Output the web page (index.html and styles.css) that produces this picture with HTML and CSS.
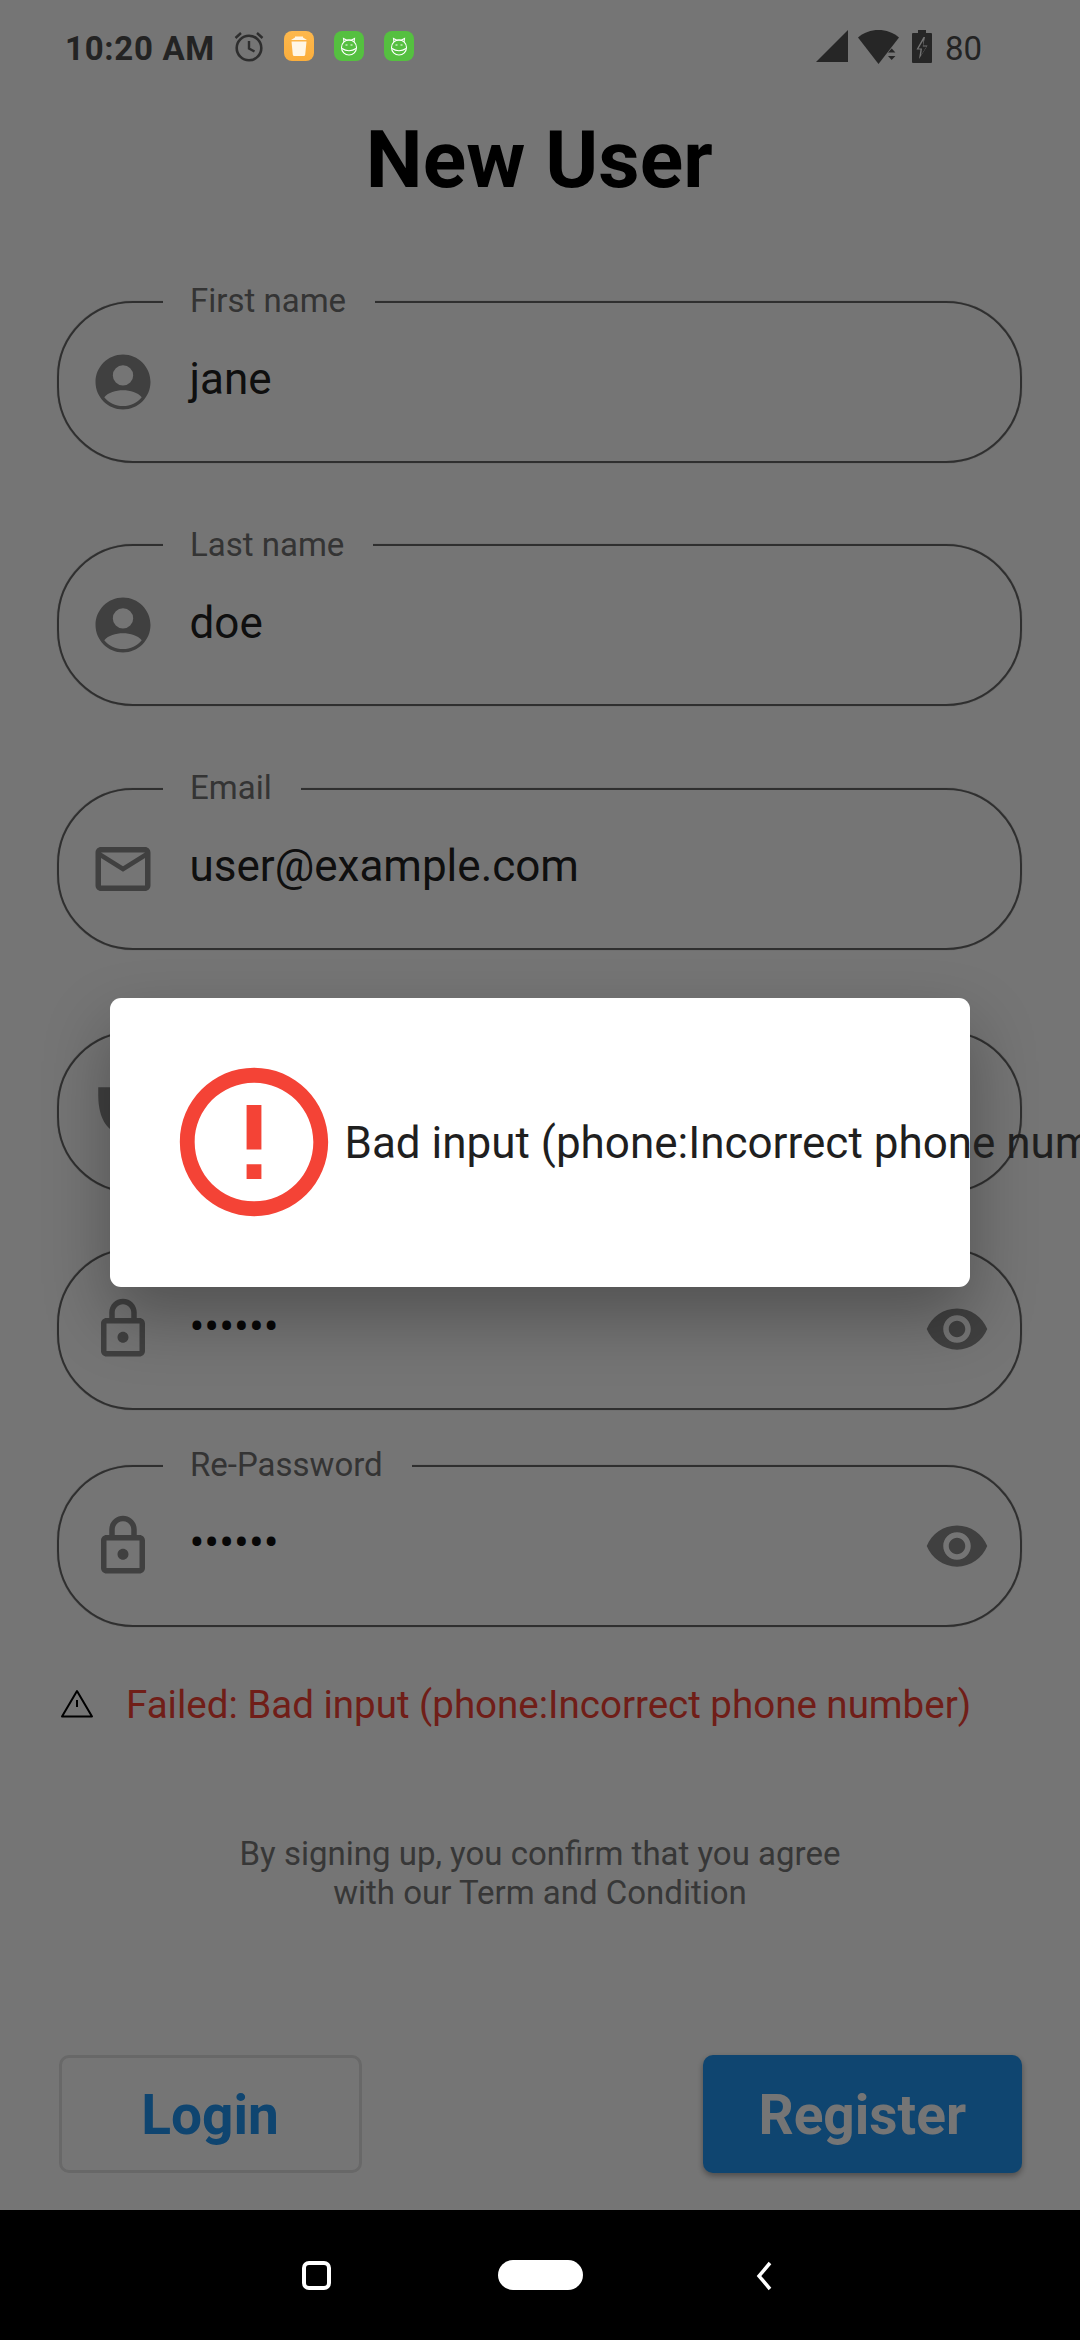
FILE: index.html
```html
<!DOCTYPE html>
<html lang="en">
<head>
<meta charset="utf-8">
<title>New User</title>
<link rel="stylesheet" href="styles.css">
</head>
<body>
<div class="screen">
  <main class="app">
    <header class="status">
      <span class="time">10:20 AM</span>
      <svg class="alarm" viewBox="0 0 30 31"><circle cx="15" cy="17" r="12.300" fill="none" stroke="#2e2e2e" stroke-width="2.600"/><path d="M15 10v7.500l5.500 3M1.500 7 7 2M28.500 7 23 2" fill="none" stroke="#2e2e2e" stroke-width="2.400"/></svg>
      <span class="badge badge-orange"><svg viewBox="0 0 30 30"><path d="M7.500 10.500h15l-1.300 13.200a1.500 1.500 0 0 1-1.500 1.300h-9.400a1.500 1.500 0 0 1-1.500-1.300zM7 9l4-2.500V5.500h8v1L23 9z" fill="#fff6e6"/></svg></span>
      <span class="badge badge-green"><svg viewBox="0 0 30 30"><g fill="none" stroke="#fff" stroke-width="1.100"><circle cx="15" cy="16.500" r="7.500"/><path d="M8 17.500c4 3 10 3 14 0M10 11 9.500 7.500l3 1.500h5l3-1.500-.5 3.500"/></g><path d="M11.500 14h2M16.500 14h2" stroke="#fff"/></svg></span>
      <span class="badge badge-green"><svg viewBox="0 0 30 30"><g fill="none" stroke="#fff" stroke-width="1.100"><circle cx="15" cy="16.500" r="7.500"/><path d="M8 17.500c4 3 10 3 14 0M10 11 9.500 7.500l3 1.500h5l3-1.500-.5 3.500"/></g><path d="M11.500 14h2M16.500 14h2" stroke="#fff"/></svg></span>
      <span class="status-right">
        <svg class="signal" viewBox="0 0 32 32"><path d="M0 32 32 0v32z" fill="#262626"/></svg>
        <svg class="wifi" viewBox="0 0 41 34"><path d="M0 7.500C11-2.500 30-2.500 41 7.500L20.500 34z" fill="#262626"/><path d="M30 22.500l3.700-4 3.700 4zM30 26l3.700 4 3.700-4z" fill="#262626"/></svg>
        <svg class="battery" viewBox="0 0 20 33"><path d="M6 0h8v3h5a1 1 0 0 1 1 1v28a1 1 0 0 1-1 1H1a1 1 0 0 1-1-1V4a1 1 0 0 1 1-1h5z" fill="#262626"/><path d="M11.500 7 4.500 19.500h4L7 29l8.500-13.500h-4.300L13 7z" fill="#757575"/><path d="M11.500 10 6.500 18.500h3.500l-1 7 5.500-9h-3.700z" fill="#262626"/></svg>
        <span class="level">80</span>
      </span>
    </header>

    <h1 class="title">New User</h1>

    <form class="form">
      <div class="field field-roomy">
        <span class="legend">First name</span>
        <svg class="lead" viewBox="0 0 24 24"><use href="#i-account"/></svg>
        <span class="value">jane</span>
      </div>
      <div class="field field-roomy">
        <span class="legend">Last name</span>
        <svg class="lead" viewBox="0 0 24 24"><use href="#i-account"/></svg>
        <span class="value">doe</span>
      </div>
      <div class="field field-roomy">
        <span class="legend">Email</span>
        <svg class="lead" viewBox="0 0 24 24"><path d="M22 6c0-1.100-.9-2-2-2H4c-1.100 0-2 .9-2 2v12c0 1.100.9 2 2 2h16c1.100 0 2-.9 2-2V6zm-2 0-8 5-8-5h16zm0 12H4V8l8 5 8-5v10z"/></svg>
        <span class="value">user@example.com</span>
      </div>
      <div class="field">
        <span class="legend">Phone</span>
        <svg class="lead" viewBox="0 0 24 24"><path d="M3 3h18v3c0 9-4 14-9 14S3 15 3 6z"/></svg>
      </div>
      <div class="field">
        <span class="legend">Password</span>
        <svg class="lead" viewBox="0 0 24 24"><use href="#i-lock"/></svg>
        <span class="value dots">••••••</span>
        <svg class="trail" viewBox="0 0 24 24"><use href="#i-eye"/></svg>
      </div>
      <div class="field">
        <span class="legend">Re-Password</span>
        <svg class="lead" viewBox="0 0 24 24"><use href="#i-lock"/></svg>
        <span class="value dots">••••••</span>
        <svg class="trail" viewBox="0 0 24 24"><use href="#i-eye"/></svg>
      </div>
    </form>

    <div class="failure">
      <svg class="warn" viewBox="0 0 34 30"><path d="M17 2 32 27.500H2z" fill="none" stroke="#000" stroke-width="2" stroke-linejoin="round"/><path d="M17 11v7" stroke="#000" stroke-width="2"/></svg>
      <span class="failure-text">Failed: Bad input (phone:Incorrect phone number)</span>
    </div>

    <p class="terms">By signing up, you confirm that you agree<br>with our Term and Condition</p>

    <div class="actions">
      <button type="button" class="btn btn-login">Login</button>
      <button type="button" class="btn btn-register">Register</button>
    </div>
  </main>

  <div class="barrier"></div>

  <div class="dialog">
    <svg class="dialog-icon" viewBox="0 0 24 24"><path d="M11 15h2v2h-2zm0-8h2v6h-2zm.99-5C6.470 2 2 6.480 2 12s4.470 10 9.990 10C17.520 22 22 17.520 22 12S17.520 2 11.990 2zM12 20c-4.420 0-8-3.580-8-8s3.580-8 8-8 8 3.580 8 8-3.580 8-8 8z"/></svg>
    <span class="dialog-text">Bad input (phone:Incorrect phone number)</span>
  </div>

  <nav class="navbar">
    <span class="nav-square"></span>
    <span class="nav-pill"></span>
    <svg class="nav-back" viewBox="0 0 18 30"><path d="M15 2 4 15l11 13" fill="none" stroke="#fff" stroke-width="3.500"/></svg>
  </nav>
</div>

<svg class="defs" width="0" height="0">
  <defs>
    <g id="i-account"><path d="M12 2C6.480 2 2 6.480 2 12s4.480 10 10 10 10-4.480 10-10S17.520 2 12 2zm0 3.900a3.700 3.700 0 1 1 0 7.400 3.700 3.700 0 0 1 0-7.400zm0 14.800c-2.700 0-5.200-1.200-6.800-3.200C6.700 15.800 9.300 15 12 15s5.300.8 6.800 2.500c-1.600 2-4.100 3.200-6.800 3.200z"/></g>
    <g id="i-lock"><path d="M18 8h-1V6c0-2.760-2.240-5-5-5S7 3.240 7 6v2H6c-1.100 0-2 .9-2 2v10c0 1.100.9 2 2 2h12c1.100 0 2-.9 2-2V10c0-1.100-.9-2-2-2zM9 6c0-1.660 1.340-3 3-3s3 1.340 3 3v2H9V6zm9 14H6V10h12v10zm-6-3c1.100 0 2-.9 2-2s-.9-2-2-2-2 .9-2 2 .9 2 2 2z"/></g>
    <g id="i-eye"><path d="M12 4.500C7 4.500 2.730 7.610 1 12c1.730 4.390 6 7.500 11 7.500s9.270-3.110 11-7.500c-1.730-4.390-6-7.500-11-7.500zM12 17c-2.760 0-5-2.240-5-5s2.240-5 5-5 5 2.240 5 5-2.240 5-5 5zm0-8c-1.660 0-3 1.340-3 3s1.340 3 3 3 3-1.340 3-3-1.340-3-3-3z"/></g>
  </defs>
</svg>
</body>
</html>
```
FILE: styles.css
```css
* { box-sizing: border-box; }
html, body { margin: 0; padding: 0; }
body { width: 1080px; height: 2340px; overflow: hidden; background: #fff; font-family: Roboto, "Liberation Sans", sans-serif; }
.defs { position: absolute; }
.screen { position: relative; width: 1080px; height: 2340px; display: flex; flex-direction: column; overflow: hidden; }
.app { height: 2210px; padding: 0 58.5px 0 57px; display: flex; flex-direction: column; background: #fff; }

.status { position: relative; z-index: 2; height: 96px; margin: 0 -58.5px 0 -57px; padding: 0 98px 0 65px; display: flex; align-items: center; color: #232323; }
.time { font-size: 33px; font-weight: 700; letter-spacing: .7px; width: 169px; white-space: nowrap; }
.alarm { width: 30px; height: 31px; margin-bottom: 3px; }
.badge { width: 30px; height: 30px; border-radius: 8px; margin-left: 20px; margin-bottom: 4px; display: flex; }
.badge svg { width: 100%; height: 100%; }
.badge-orange { background: linear-gradient(#fdb84d, #fbae3c); }
.badge-green { background: #55c040; }
.status-right { margin-left: auto; display: flex; align-items: center; }
.signal { width: 32px; height: 32px; margin-bottom: 4px; }
.wifi { width: 41px; height: 34px; margin: 0 0 3px 10px; }
.battery { width: 20px; height: 33px; margin: 0 0 3px 13px; }
.level { font-size: 33px; margin-left: 13px; }

.title { margin: 0; height: 124px; font-size: 80.5px; line-height: 128px; font-weight: 700; text-align: center; color: #000; }

.form { display: flex; flex-direction: column; margin-top: 80.7px; gap: 54.6px; }
.field { position: relative; height: 162px; flex: none; border: 2px solid #686868; border-radius: 76px; box-shadow: 0 0 1px rgba(104,104,104,.8); display: flex; align-items: center; padding: 0 30px 0 31px; }
.field-roomy { margin-bottom: 27px; }
.legend { position: absolute; left: 104px; top: -21.5px; padding: 0 29px 0 27px; font-size: 33px; line-height: 40px; background: #fff; color: #727272; }
.lead { width: 66px; height: 66px; fill: #8c8c8c; flex: none; }
.trail { width: 66px; height: 66px; fill: #8c8c8c; flex: none; margin-left: auto; }
.value { margin: 0 0 5px 33.5px; font-size: 44px; color: #222; }
.dots { color: #111; }

.failure { display: flex; align-items: center; margin-top: 52.5px; height: 50px; }
.warn { width: 34px; height: 30px; margin-left: 3px; flex: none; }
.failure-text { margin-left: 32px; font-size: 38.5px; color: #f44336; white-space: nowrap; }

.terms { margin: 105px 0 0; padding-left: 1.5px; font-size: 33px; line-height: 39px; text-align: center; color: #787878; }

.actions { margin: auto 0 37px 1.5px; display: flex; justify-content: space-between; }
.btn { height: 118px; border-radius: 10px; font-family: inherit; font-weight: 700; font-size: 55px; padding: 2px 0 0; }
.btn-login { width: 303px; background: transparent; border: 3px solid #e2e2e2; color: #2196f3; }
.btn-register { width: 318.5px; background: #2196f3; border: 0; color: #fff; box-shadow: 0 3px 6px rgba(0,0,0,.35); }

.barrier { position: absolute; left: 0; top: 0; width: 1080px; height: 2210px; background: rgba(0,0,0,.54); }

.dialog { position: absolute; left: 110px; top: 998px; width: 860px; height: 289px; background: #fff; border-radius: 11px; box-shadow: 0 30px 66px rgba(0,0,0,.3); display: flex; align-items: center; padding-left: 55px; }
.dialog-icon { width: 178px; height: 178px; fill: #f44336; flex: none; margin-top: -1px; }
.dialog-text { position: absolute; left: 234.5px; top: 119px; font-size: 44px; line-height: 52px; color: #1f1f1f; white-space: nowrap; }

.navbar { height: 130px; background: #000; display: flex; align-items: center; padding-left: 302px; }
.nav-square { width: 29px; height: 29px; border: 4px solid #fff; border-radius: 7px; flex: none; }
.nav-pill { width: 85px; height: 30px; margin-left: 167px; background: #fff; border-radius: 15px; flex: none; }
.nav-back { width: 18px; height: 30px; margin: 2px 0 0 172px; flex: none; }
```
